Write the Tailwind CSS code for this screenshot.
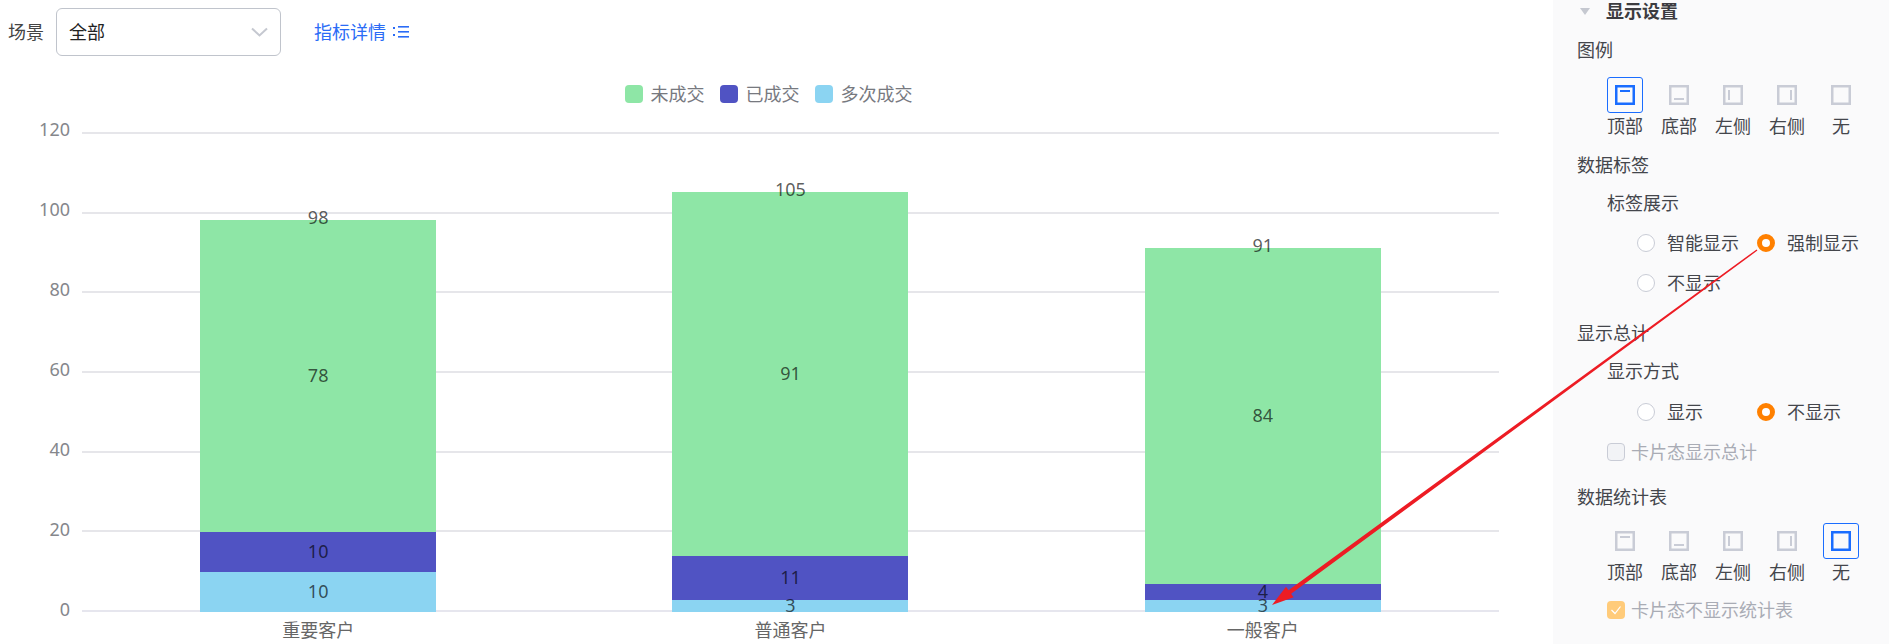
<!DOCTYPE html>
<html lang="zh-CN">
<head>
<meta charset="UTF-8">
<title>显示设置</title>
<script src="https://cdn.jsdelivr.net/npm/@tailwindcss/browser@4"></script>
</head>
<body class="bg-white font-['Noto_Sans','Noto_Sans_CJK_SC',sans-serif] text-[18px]">
<div class="relative flex h-[644px] w-[1889px] overflow-hidden">

  <!-- left: filter + chart -->
  <div class="w-[1553px] shrink-0">
    <div class="flex items-center pt-2 h-14">
      <span class="ml-2 w-12 text-[#444]">场景</span>
      <div class="flex h-12 w-[225px] items-center justify-between rounded-md border border-[#c0c4cc] pl-3 pr-3">
        <span class="text-[#222]">全部</span>
        <svg class="h-[10px] w-[17px]" viewBox="0 0 17 10" fill="none" stroke="#c5c8d0" stroke-width="2"><path d="M1 1.5 8.5 8.5 16 1.5"/></svg>
      </div>
      <span class="ml-[33px] text-[#2b6cf6]">指标详情</span>
      <svg class="ml-[7px] h-[14px] w-4" viewBox="0 0 16 14" fill="#2b6cf6"><rect x="0" y="2" width="2" height="2"/><rect x="0" y="9" width="2" height="2"/><rect x="5" y="1" width="11" height="1.6"/><rect x="5" y="6" width="11" height="1.6"/><rect x="5" y="11" width="11" height="1.6"/></svg>
    </div>

    <!-- legend -->
    <div class="mt-[29px] flex h-[18px] w-[1537px] items-center justify-center text-[#77797f]">
      <span class="h-[18px] w-[18px] rounded-[4px] bg-[#8ee6a6]"></span><span class="ml-2 mr-[15px]">未成交</span>
      <span class="h-[18px] w-[18px] rounded-[4px] bg-[#5053c3]"></span><span class="ml-2 mr-[15px]">已成交</span>
      <span class="h-[18px] w-[18px] rounded-[4px] bg-[#8bd4f2]"></span><span class="ml-2">多次成交</span>
    </div>

    <!-- chart -->
    <div class="mt-[29px] flex">
      <div class="-mt-[3px] flex h-[480px] w-[70px] flex-col items-end justify-between text-[#85878c]">
        <div class="flex h-0 items-center">120</div>
        <div class="flex h-0 items-center">100</div>
        <div class="flex h-0 items-center">80</div>
        <div class="flex h-0 items-center">60</div>
        <div class="flex h-0 items-center">40</div>
        <div class="flex h-0 items-center">20</div>
        <div class="flex h-0 items-center">0</div>
      </div>
      <div class="ml-3 w-[1417px]">
        <div class="relative h-[480px]">
          <div class="absolute inset-0 flex flex-col justify-between">
            <div class="h-[2px] bg-[#e6e6ea]"></div>
            <div class="h-[2px] bg-[#e6e6ea]"></div>
            <div class="h-[2px] bg-[#e6e6ea]"></div>
            <div class="h-[2px] bg-[#e6e6ea]"></div>
            <div class="h-[2px] bg-[#e6e6ea]"></div>
            <div class="h-[2px] bg-[#e6e6ea]"></div>
            <div class="h-[2px] bg-[#e6e6ee]"></div>
          </div>
          <div class="relative grid h-full grid-cols-3 items-end justify-items-center text-black/65">
            <div class="flex w-[236px] flex-col">
              <div class="relative z-10 flex h-0 -translate-y-[3px] items-center justify-center">98</div>
              <div class="flex h-[312px] items-center justify-center bg-[#8ee6a6] pb-[2px]">78</div>
              <div class="flex h-10 items-center justify-center bg-[#5053c3] pb-[2px]">10</div>
              <div class="flex h-10 items-center justify-center bg-[#8bd4f2] pb-[2px]">10</div>
            </div>
            <div class="flex w-[236px] flex-col">
              <div class="relative z-10 flex h-0 -translate-y-[3px] items-center justify-center">105</div>
              <div class="flex h-[364px] items-center justify-center bg-[#8ee6a6] pb-[2px]">91</div>
              <div class="flex h-11 items-center justify-center bg-[#5053c3] pb-[2px]">11</div>
              <div class="flex h-3 items-center justify-center bg-[#8bd4f2] pb-[2px]">3</div>
            </div>
            <div class="flex w-[236px] flex-col">
              <div class="relative z-10 flex h-0 -translate-y-[3px] items-center justify-center">91</div>
              <div class="flex h-[336px] items-center justify-center bg-[#8ee6a6] pb-[2px]">84</div>
              <div class="flex h-4 items-center justify-center bg-[#5053c3] pb-[2px]">4</div>
              <div class="flex h-3 items-center justify-center bg-[#8bd4f2] pb-[2px]">3</div>
            </div>
          </div>
        </div>
        <div class="mt-[6px] grid grid-cols-3 justify-items-center leading-6 text-[#666]">
          <span>重要客户</span>
          <span>普通客户</span>
          <span>一般客户</span>
        </div>
      </div>
    </div>
  </div>

  <!-- right: settings panel -->
  <div class="w-[336px] shrink-0 bg-[#fafafb] pl-6 leading-[22px] text-[#44464c]">
    <div class="flex h-[22px] items-center">
      <span class="ml-[3px] h-0 w-0 border-x-[5.5px] border-t-[7px] border-x-transparent border-t-[#c5c8d0]"></span>
      <span class="ml-4 font-bold text-[#3c3c40]">显示设置</span>
    </div>

    <div class="mt-[17px]">图例</div>
    <div class="mt-4 ml-[30px] flex gap-[18px]">
      <div class="flex h-9 w-9 items-center justify-center rounded-[3px] border border-[#1a6dff]">
        <svg class="h-5 w-5" viewBox="0 0 20 20" fill="none" stroke="#1a6dff" stroke-width="2.5"><rect x="1.25" y="1.25" width="17.5" height="17.5"/><path d="M5 6h10" stroke-width="2"/></svg>
      </div>
      <div class="flex h-9 w-9 items-center justify-center">
        <svg class="h-5 w-5" viewBox="0 0 20 20" fill="none" stroke="#c9ccd6" stroke-width="2.5"><rect x="1.25" y="1.25" width="17.5" height="17.5"/><path d="M5 14h10" stroke-width="2"/></svg>
      </div>
      <div class="flex h-9 w-9 items-center justify-center">
        <svg class="h-5 w-5" viewBox="0 0 20 20" fill="none" stroke="#c9ccd6" stroke-width="2.5"><rect x="1.25" y="1.25" width="17.5" height="17.5"/><path d="M6 5v10" stroke-width="2"/></svg>
      </div>
      <div class="flex h-9 w-9 items-center justify-center">
        <svg class="h-5 w-5" viewBox="0 0 20 20" fill="none" stroke="#c9ccd6" stroke-width="2.5"><rect x="1.25" y="1.25" width="17.5" height="17.5"/><path d="M14 5v10" stroke-width="2"/></svg>
      </div>
      <div class="flex h-9 w-9 items-center justify-center">
        <svg class="h-5 w-5" viewBox="0 0 20 20" fill="none" stroke="#c9ccd6" stroke-width="2.5"><rect x="1.25" y="1.25" width="17.5" height="17.5"/></svg>
      </div>
    </div>
    <div class="mt-[2px] ml-[30px] flex gap-[18px] text-center">
      <span class="w-9">顶部</span><span class="w-9">底部</span><span class="w-9">左侧</span><span class="w-9">右侧</span><span class="w-9">无</span>
    </div>

    <div class="mt-[17px]">数据标签</div>
    <div class="mt-4 ml-[30px]">标签展示</div>
    <div class="mt-[18px] ml-[60px] grid grid-cols-[120px_120px] gap-y-[18px]">
      <div class="flex items-center gap-3"><span class="h-[18px] w-[18px] rounded-full border border-[#c9ccd6] bg-white"></span>智能显示</div>
      <div class="flex items-center gap-3"><span class="h-[18px] w-[18px] rounded-full border-[5px] border-[#ff8000] bg-white"></span>强制显示</div>
      <div class="flex items-center gap-3"><span class="h-[18px] w-[18px] rounded-full border border-[#c9ccd6] bg-white"></span>不显示</div>
    </div>

    <div class="mt-[28px]">显示总计</div>
    <div class="mt-4 ml-[30px]">显示方式</div>
    <div class="mt-[19px] ml-[60px] grid grid-cols-[120px_120px]">
      <div class="flex items-center gap-3"><span class="h-[18px] w-[18px] rounded-full border border-[#c9ccd6] bg-white"></span>显示</div>
      <div class="flex items-center gap-3"><span class="h-[18px] w-[18px] rounded-full border-[5px] border-[#ff8000] bg-white"></span>不显示</div>
    </div>
    <div class="mt-[18px] ml-[30px] flex items-center gap-[6px] text-[#a9acb5]">
      <span class="h-[18px] w-[18px] rounded-[4px] border border-[#c9ccd6] bg-[#f2f3f6]"></span>卡片态显示总计
    </div>

    <div class="mt-[23px]">数据统计表</div>
    <div class="mt-[15px] ml-[30px] flex gap-[18px]">
      <div class="flex h-9 w-9 items-center justify-center">
        <svg class="h-5 w-5" viewBox="0 0 20 20" fill="none" stroke="#c9ccd6" stroke-width="2.5"><rect x="1.25" y="1.25" width="17.5" height="17.5"/><path d="M5 6h10" stroke-width="2"/></svg>
      </div>
      <div class="flex h-9 w-9 items-center justify-center">
        <svg class="h-5 w-5" viewBox="0 0 20 20" fill="none" stroke="#c9ccd6" stroke-width="2.5"><rect x="1.25" y="1.25" width="17.5" height="17.5"/><path d="M5 14h10" stroke-width="2"/></svg>
      </div>
      <div class="flex h-9 w-9 items-center justify-center">
        <svg class="h-5 w-5" viewBox="0 0 20 20" fill="none" stroke="#c9ccd6" stroke-width="2.5"><rect x="1.25" y="1.25" width="17.5" height="17.5"/><path d="M6 5v10" stroke-width="2"/></svg>
      </div>
      <div class="flex h-9 w-9 items-center justify-center">
        <svg class="h-5 w-5" viewBox="0 0 20 20" fill="none" stroke="#c9ccd6" stroke-width="2.5"><rect x="1.25" y="1.25" width="17.5" height="17.5"/><path d="M14 5v10" stroke-width="2"/></svg>
      </div>
      <div class="flex h-9 w-9 items-center justify-center rounded-[3px] border border-[#1a6dff]">
        <svg class="h-5 w-5" viewBox="0 0 20 20" fill="none" stroke="#1a6dff" stroke-width="2.5"><rect x="1.25" y="1.25" width="17.5" height="17.5"/></svg>
      </div>
    </div>
    <div class="mt-[2px] ml-[30px] flex gap-[18px] text-center">
      <span class="w-9">顶部</span><span class="w-9">底部</span><span class="w-9">左侧</span><span class="w-9">右侧</span><span class="w-9">无</span>
    </div>
    <div class="mt-4 ml-[30px] flex items-center gap-[6px] text-[#a9acb5]">
      <span class="flex h-[18px] w-[18px] items-center justify-center rounded-[4px] bg-[#ffcb7a]">
        <svg class="h-3 w-3" viewBox="0 0 12 12" fill="none" stroke="#fff" stroke-width="1.2"><path d="M1.5 6 5 9.5 10.5 2.5"/></svg>
      </span>卡片态不显示统计表
    </div>
  </div>

  <!-- red annotation arrow drawn over the screenshot -->
  <svg class="pointer-events-none absolute inset-0" width="1889" height="644" viewBox="0 0 1889 644">
    <polygon fill="#ed1c24" points="1757.4,250.6 1291.1,593.8 1293.6,597.2 1272,605 1286,586.8 1288.5,590.2 1756.6,249.4"/>
  </svg>
</div>
</body>
</html>
